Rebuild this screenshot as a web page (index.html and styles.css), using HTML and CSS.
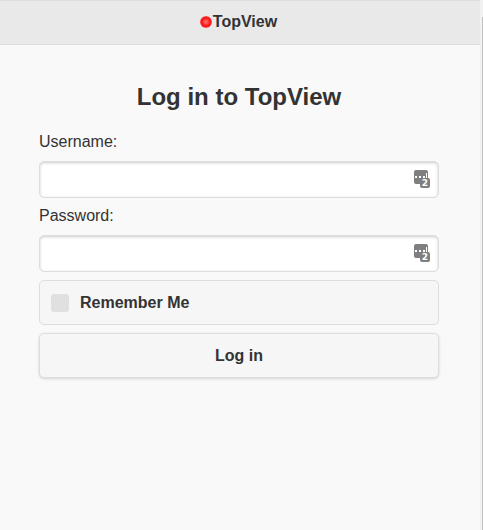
FILE: index.html
```html
<!DOCTYPE html>
<html lang="en">
<head>
    <meta charset="UTF-8">
    <meta name="viewport" content="width=device-width, initial-scale=1.0">
    <title>TopView</title>
    <link rel="stylesheet" href="styles.css">
</head>
<body>
    <div class="page">
        <header class="header">
            <svg class="logo" width="14" height="14" viewBox="0 0 14 14" aria-hidden="true">
                <defs>
                    <radialGradient id="dot">
                        <stop offset="0" stop-color="#ff7070"/>
                        <stop offset="0.35" stop-color="#ff4b4b"/>
                        <stop offset="0.65" stop-color="#fb1414"/>
                        <stop offset="0.85" stop-color="#fc2020"/>
                        <stop offset="1" stop-color="#f66"/>
                    </radialGradient>
                </defs>
                <circle cx="7" cy="7" r="6" fill="url(#dot)"/>
            </svg>
            <span class="brand">TopView</span>
        </header>
        <main class="content">
            <h2>Log in to TopView</h2>
            <form>
                <label for="username">Username:</label>
                <div class="field">
                    <input type="text" id="username" name="username">
                    <svg class="fill-icon" width="16" height="18" viewBox="0 0 16 18" aria-hidden="true">
                        <rect width="14" height="14" rx="2" fill="#7f7f7f"/>
                        <path d="M1 6h2v2H1zM5 6h2v2H5zM9 6h2v2H9zM12 3h1v5h-1z" fill="#fff"/>
                        <rect x="6" y="8" width="10" height="10" rx="2" fill="#7f7f7f"/>
                        <text x="11" y="16" class="fill-count">2</text>
                    </svg>
                </div>
                <label for="password">Password:</label>
                <div class="field">
                    <input type="password" id="password" name="password">
                    <svg class="fill-icon" width="16" height="18" viewBox="0 0 16 18" aria-hidden="true">
                        <rect width="14" height="14" rx="2" fill="#7f7f7f"/>
                        <path d="M1 6h2v2H1zM5 6h2v2H5zM9 6h2v2H9zM12 3h1v5h-1z" fill="#fff"/>
                        <rect x="6" y="8" width="10" height="10" rx="2" fill="#7f7f7f"/>
                        <text x="11" y="16" class="fill-count">2</text>
                    </svg>
                </div>
                <label class="remember" for="remember">
                    <input type="checkbox" id="remember" name="remember">
                    Remember Me
                </label>
                <button type="submit">Log in</button>
            </form>
        </main>
    </div>
    <div class="scroll-track"></div>
</body>
</html>
```

FILE: styles.css
```css
* {
    box-sizing: border-box;
}
body {
    margin: 0;
    min-height: 100vh;
    display: flex;
    background: #f9f9f9;
    color: #333;
    font-family: Arial, "Liberation Sans", sans-serif;
    font-size: 16px;
    line-height: 20px;
}
.page {
    flex: 1;
}
.header {
    display: flex;
    justify-content: center;
    align-items: center;
    padding: 11px 4px 12px 0;
    background: #e9e9e9;
    border-top: 1px solid #ddd;
    border-bottom: 1px solid #ddd;
    font-weight: bold;
    text-shadow: 0 1px 0 #eee;
}
.content {
    padding: 36px 41px 16px 39px;
}
h2 {
    margin: 0 0 19px;
    font-size: 24px;
    line-height: 32px;
    text-align: center;
}
label {
    display: block;
    margin-bottom: 9px;
}
.field {
    position: relative;
    margin-bottom: 8px;
}
.field input {
    display: block;
    width: 100%;
    height: 37px;
    padding: 6px 32px 6px 8px;
    border: 1px solid #ddd;
    border-radius: 5px;
    background: #fff;
    box-shadow: inset 0 1px 3px rgba(0, 0, 0, 0.2);
    font: inherit;
    outline: none;
}
/* password manager badge inside the input */
.fill-icon {
    position: absolute;
    right: 9px;
    top: 9px;
    overflow: visible;
}
.fill-count {
    fill: #fff;
    font: bold 9px "DejaVu Sans", sans-serif;
    text-anchor: middle;
}
.remember {
    display: flex;
    align-items: center;
    gap: 11px;
    height: 45px;
    margin-bottom: 8px;
    padding: 0 11px;
    background: #f6f6f6;
    border: 1px solid #ddd;
    border-radius: 5px;
    font-weight: bold;
}
.remember input {
    appearance: none;
    width: 18px;
    height: 18px;
    margin: 0;
    border-radius: 3px;
    background: #e0e0e0;
}
.remember input:checked {
    background: #38c;
}
button {
    display: block;
    width: 100%;
    height: 45px;
    background: #f6f6f6;
    border: 1px solid #ddd;
    border-radius: 5px;
    box-shadow: 0 1px 3px rgba(0, 0, 0, 0.15);
    color: #333;
    font: inherit;
    font-weight: bold;
    cursor: pointer;
}
button:hover {
    background: #ededed;
}
.scroll-track {
    width: 3px;
    padding: 17px 0 0 2px;
    background: #f1f1f1;
}
.scroll-track::before {
    content: "";
    display: block;
    height: 100%;
    background: #c1c1c1;
}
```
